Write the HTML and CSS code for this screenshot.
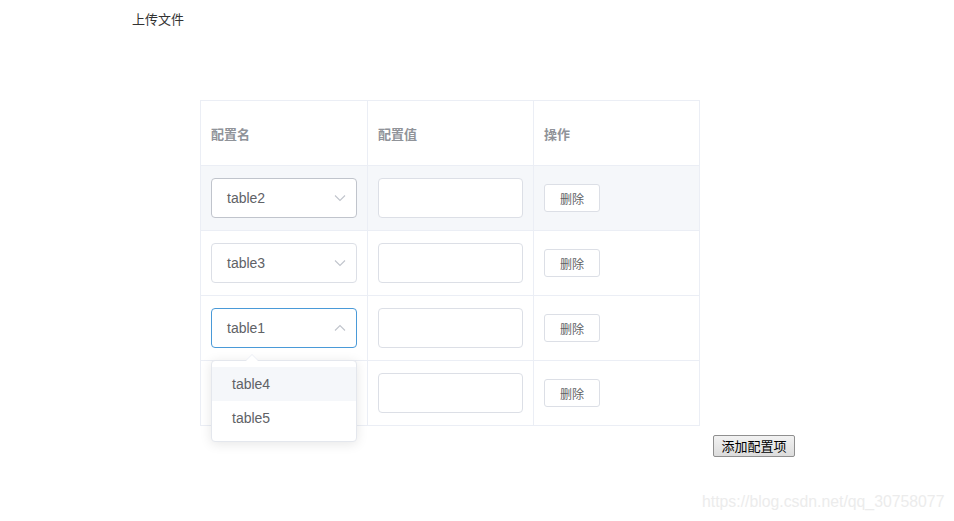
FILE: index.html
```html
<!DOCTYPE html>
<html>
<head>
<meta charset="utf-8">
<link rel="stylesheet" href="styles.css">
</head>
<body>
<div class="page">
  <div class="upload">上传文件</div>
  <div class="area">
    <div class="table">
      <div class="row head">
        <div class="cell">配置名</div>
        <div class="cell">配置值</div>
        <div class="cell">操作</div>
      </div>
      <div class="row hover">
        <div class="cell"><div class="select hov"><span>table2</span><svg class="arrow" width="12" height="8" viewBox="0 0 12 8"><path d="M1 1.5 L6 6.5 L11 1.5" fill="none" stroke="#c0c4cc" stroke-width="1.1"/></svg></div></div>
        <div class="cell"><div class="input"></div></div>
        <div class="cell"><button class="del">删除</button></div>
      </div>
      <div class="row">
        <div class="cell"><div class="select"><span>table3</span><svg class="arrow" width="12" height="8" viewBox="0 0 12 8"><path d="M1 1.5 L6 6.5 L11 1.5" fill="none" stroke="#c0c4cc" stroke-width="1.1"/></svg></div></div>
        <div class="cell"><div class="input"></div></div>
        <div class="cell"><button class="del">删除</button></div>
      </div>
      <div class="row">
        <div class="cell sel-cell"><div class="select focus"><span>table1</span><svg class="arrow" width="12" height="8" viewBox="0 0 12 8"><path d="M1 6.5 L6 1.5 L11 6.5" fill="none" stroke="#c0c4cc" stroke-width="1.1"/></svg></div>
          <div class="dropdown">
            <div class="pointer"></div>
            <div class="opt active">table4</div>
            <div class="opt">table5</div>
          </div>
        </div>
        <div class="cell"><div class="input"></div></div>
        <div class="cell"><button class="del">删除</button></div>
      </div>
      <div class="row">
        <div class="cell"><div class="select"></div></div>
        <div class="cell"><div class="input"></div></div>
        <div class="cell"><button class="del">删除</button></div>
      </div>
    </div>
    <div class="add-wrap"><button class="add">添加配置项</button></div>
  </div>
  <div class="mark">https://blog.csdn.net/qq_30758077</div>
</div>
</body>
</html>
```

FILE: styles.css
```css
html, body {
  margin: 0;
  padding: 0;
  background: #fff;
}
body {
  font-family: "Liberation Sans", "Noto Sans CJK SC", sans-serif;
  width: 954px;
  height: 521px;
  overflow: hidden;
}
.page {
  position: relative;
  height: 521px;
}
.upload {
  padding: 11px 0 0 132px;
  font-size: 13px;
  line-height: 18px;
  color: #333;
  height: 100px;
  box-sizing: border-box;
}
.area {
  padding-left: 200px;
}
.table {
  width: 500px;
  border-top: 1px solid #ebeef5;
  border-left: 1px solid #ebeef5;
  box-sizing: border-box;
}
.row {
  display: grid;
  grid-template-columns: 167px 166px 166px;
  height: 65px;
}
.row.hover {
  background: #f5f7fa;
}
.cell {
  border-right: 1px solid #ebeef5;
  border-bottom: 1px solid #ebeef5;
  display: flex;
  align-items: center;
  padding-left: 10px;
  box-sizing: border-box;
  position: relative;
}
.head .cell {
  color: #909399;
  font-weight: bold;
  font-size: 13px;
}
.select {
  width: 146px;
  height: 40px;
  box-sizing: border-box;
  border: 1px solid #dcdfe6;
  border-radius: 4px;
  background: #fff;
  display: flex;
  align-items: center;
  padding: 0 10px 0 15px;
  justify-content: space-between;
  font-size: 14px;
  color: #606266;
}
.select.hov {
  border-color: #c0c4cc;
}
.select.focus {
  border-color: #4a9ad8;
}
.arrow {
  display: block;
}
.input {
  width: 145px;
  height: 40px;
  box-sizing: border-box;
  border: 1px solid #dcdfe6;
  border-radius: 4px;
  background: #fff;
}
.del {
  width: 56px;
  height: 28px;
  box-sizing: border-box;
  border: 1px solid #dcdfe6;
  border-radius: 3px;
  background: #fff;
  font-family: "Noto Sans CJK SC", sans-serif;
  font-size: 12px;
  color: #606266;
  padding: 0;
}
.dropdown {
  position: absolute;
  left: 10px;
  top: 64px;
  width: 146px;
  box-sizing: border-box;
  background: #fff;
  border: 1px solid #e4e7ed;
  border-radius: 4px;
  box-shadow: 0 2px 12px 0 rgba(0,0,0,0.1);
  padding: 6px 0;
  z-index: 5;
}
.pointer {
  position: absolute;
  top: -6px;
  left: 34px;
  width: 0;
  height: 0;
  border-left: 6px solid transparent;
  border-right: 6px solid transparent;
  border-bottom: 6px solid #fff;
  filter: drop-shadow(0 -1px 0 #ebeef5);
}
.opt {
  height: 34px;
  line-height: 34px;
  padding-left: 20px;
  font-size: 14px;
  color: #606266;
}
.opt.active {
  background: #f5f7fa;
}
.add-wrap {
  padding: 9px 0 0 513px;
}
.add {
  font-family: "Noto Sans CJK SC", sans-serif;
  font-size: 13px;
  height: 22px;
  width: 82px;
  padding: 0;
  line-height: 18px;
  background: linear-gradient(#f2f2f2, #dcdcdc);
  border: 1px solid #8f8f8f;
  border-radius: 2px;
  color: #000;
}
.mark {
  position: absolute;
  left: 702px;
  top: 493px;
  font-size: 15.8px;
  color: #ececec;
  font-family: "Liberation Sans", sans-serif;
}
```
